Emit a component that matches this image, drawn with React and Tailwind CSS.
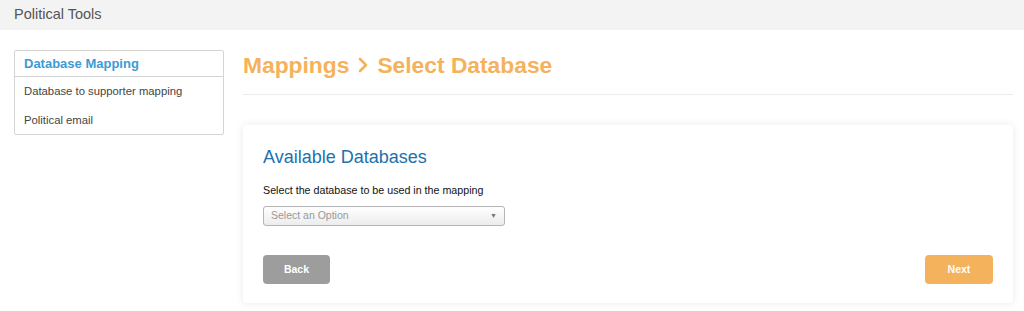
import React from 'react';

const App = () => {
  return (
    <div className="min-h-[311px] bg-white font-['Liberation_Sans',Arial,sans-serif]">
      {/* Top bar */}
      <div className="h-[30px] bg-[#f3f3f3] flex items-center pl-[14px]">
        <span className="text-[14.5px] text-[#555]">Political Tools</span>
      </div>

      <div className="flex gap-[19px] pl-[14px] pr-[11px] pt-[20px]">
        {/* Sidebar */}
        <div className="w-[210px] shrink-0 self-start border border-[#d4d4d4] rounded-[2px]">
          <div className="h-[26px] flex items-center px-[9px] border-b border-[#d4d4d4]">
            <span className="text-[13px] font-bold text-[#3c9bd6]">Database Mapping</span>
          </div>
          <div className="h-[29px] flex items-center px-[9px] text-[11.3px] text-[#444]">
            Database to supporter mapping
          </div>
          <div className="h-[28px] flex items-center px-[9px] text-[11.3px] text-[#444]">
            Political email
          </div>
        </div>

        {/* Main */}
        <div className="flex-1">
          <div className="h-[45px] pt-[3px] border-b border-[#ececec]">
            <h1 className="text-[22.8px] font-bold text-[#f5b25c] leading-[24px] flex items-center">
              Mappings
              <svg className="mx-[9px]" width="10" height="16" viewBox="0 0 10 16">
                <path d="M2 2 L8 8 L2 14" fill="none" stroke="#f5b25c" strokeWidth="2.6" strokeLinecap="round" strokeLinejoin="round" />
              </svg>
              Select Database
            </h1>
          </div>

          <div className="mt-[30px] bg-white rounded-[4px] shadow-[0_0_8px_rgba(0,0,0,0.09)] px-[20px] pt-[21px] pb-[19px]">
            <h2 className="text-[18px] text-[#1b72ad] leading-[22px]">Available Databases</h2>
            <p className="mt-[15px] text-[10.7px] leading-[14px] text-[#111]">Select the database to be used in the mapping</p>
            <div className="mt-[9px] w-[242px] h-[20px] rounded-[3px] border border-[#b5b5b5] bg-gradient-to-b from-white to-[#ececec] flex items-center justify-between px-[7px]">
              <span className="text-[10.5px] text-[#999]">Select an Option</span>
              <span className="text-[7px] text-[#777]">▼</span>
            </div>
            <div className="mt-[29px] flex justify-between">
              <button className="w-[67px] h-[29px] rounded-[4px] bg-[#9d9d9d] text-white text-[10.5px] font-bold">Back</button>
              <button className="w-[68px] h-[29px] rounded-[4px] bg-[#f5b25c] text-white text-[10.5px] font-bold">Next</button>
            </div>
          </div>
        </div>
      </div>
    </div>
  );
};

export default App;
